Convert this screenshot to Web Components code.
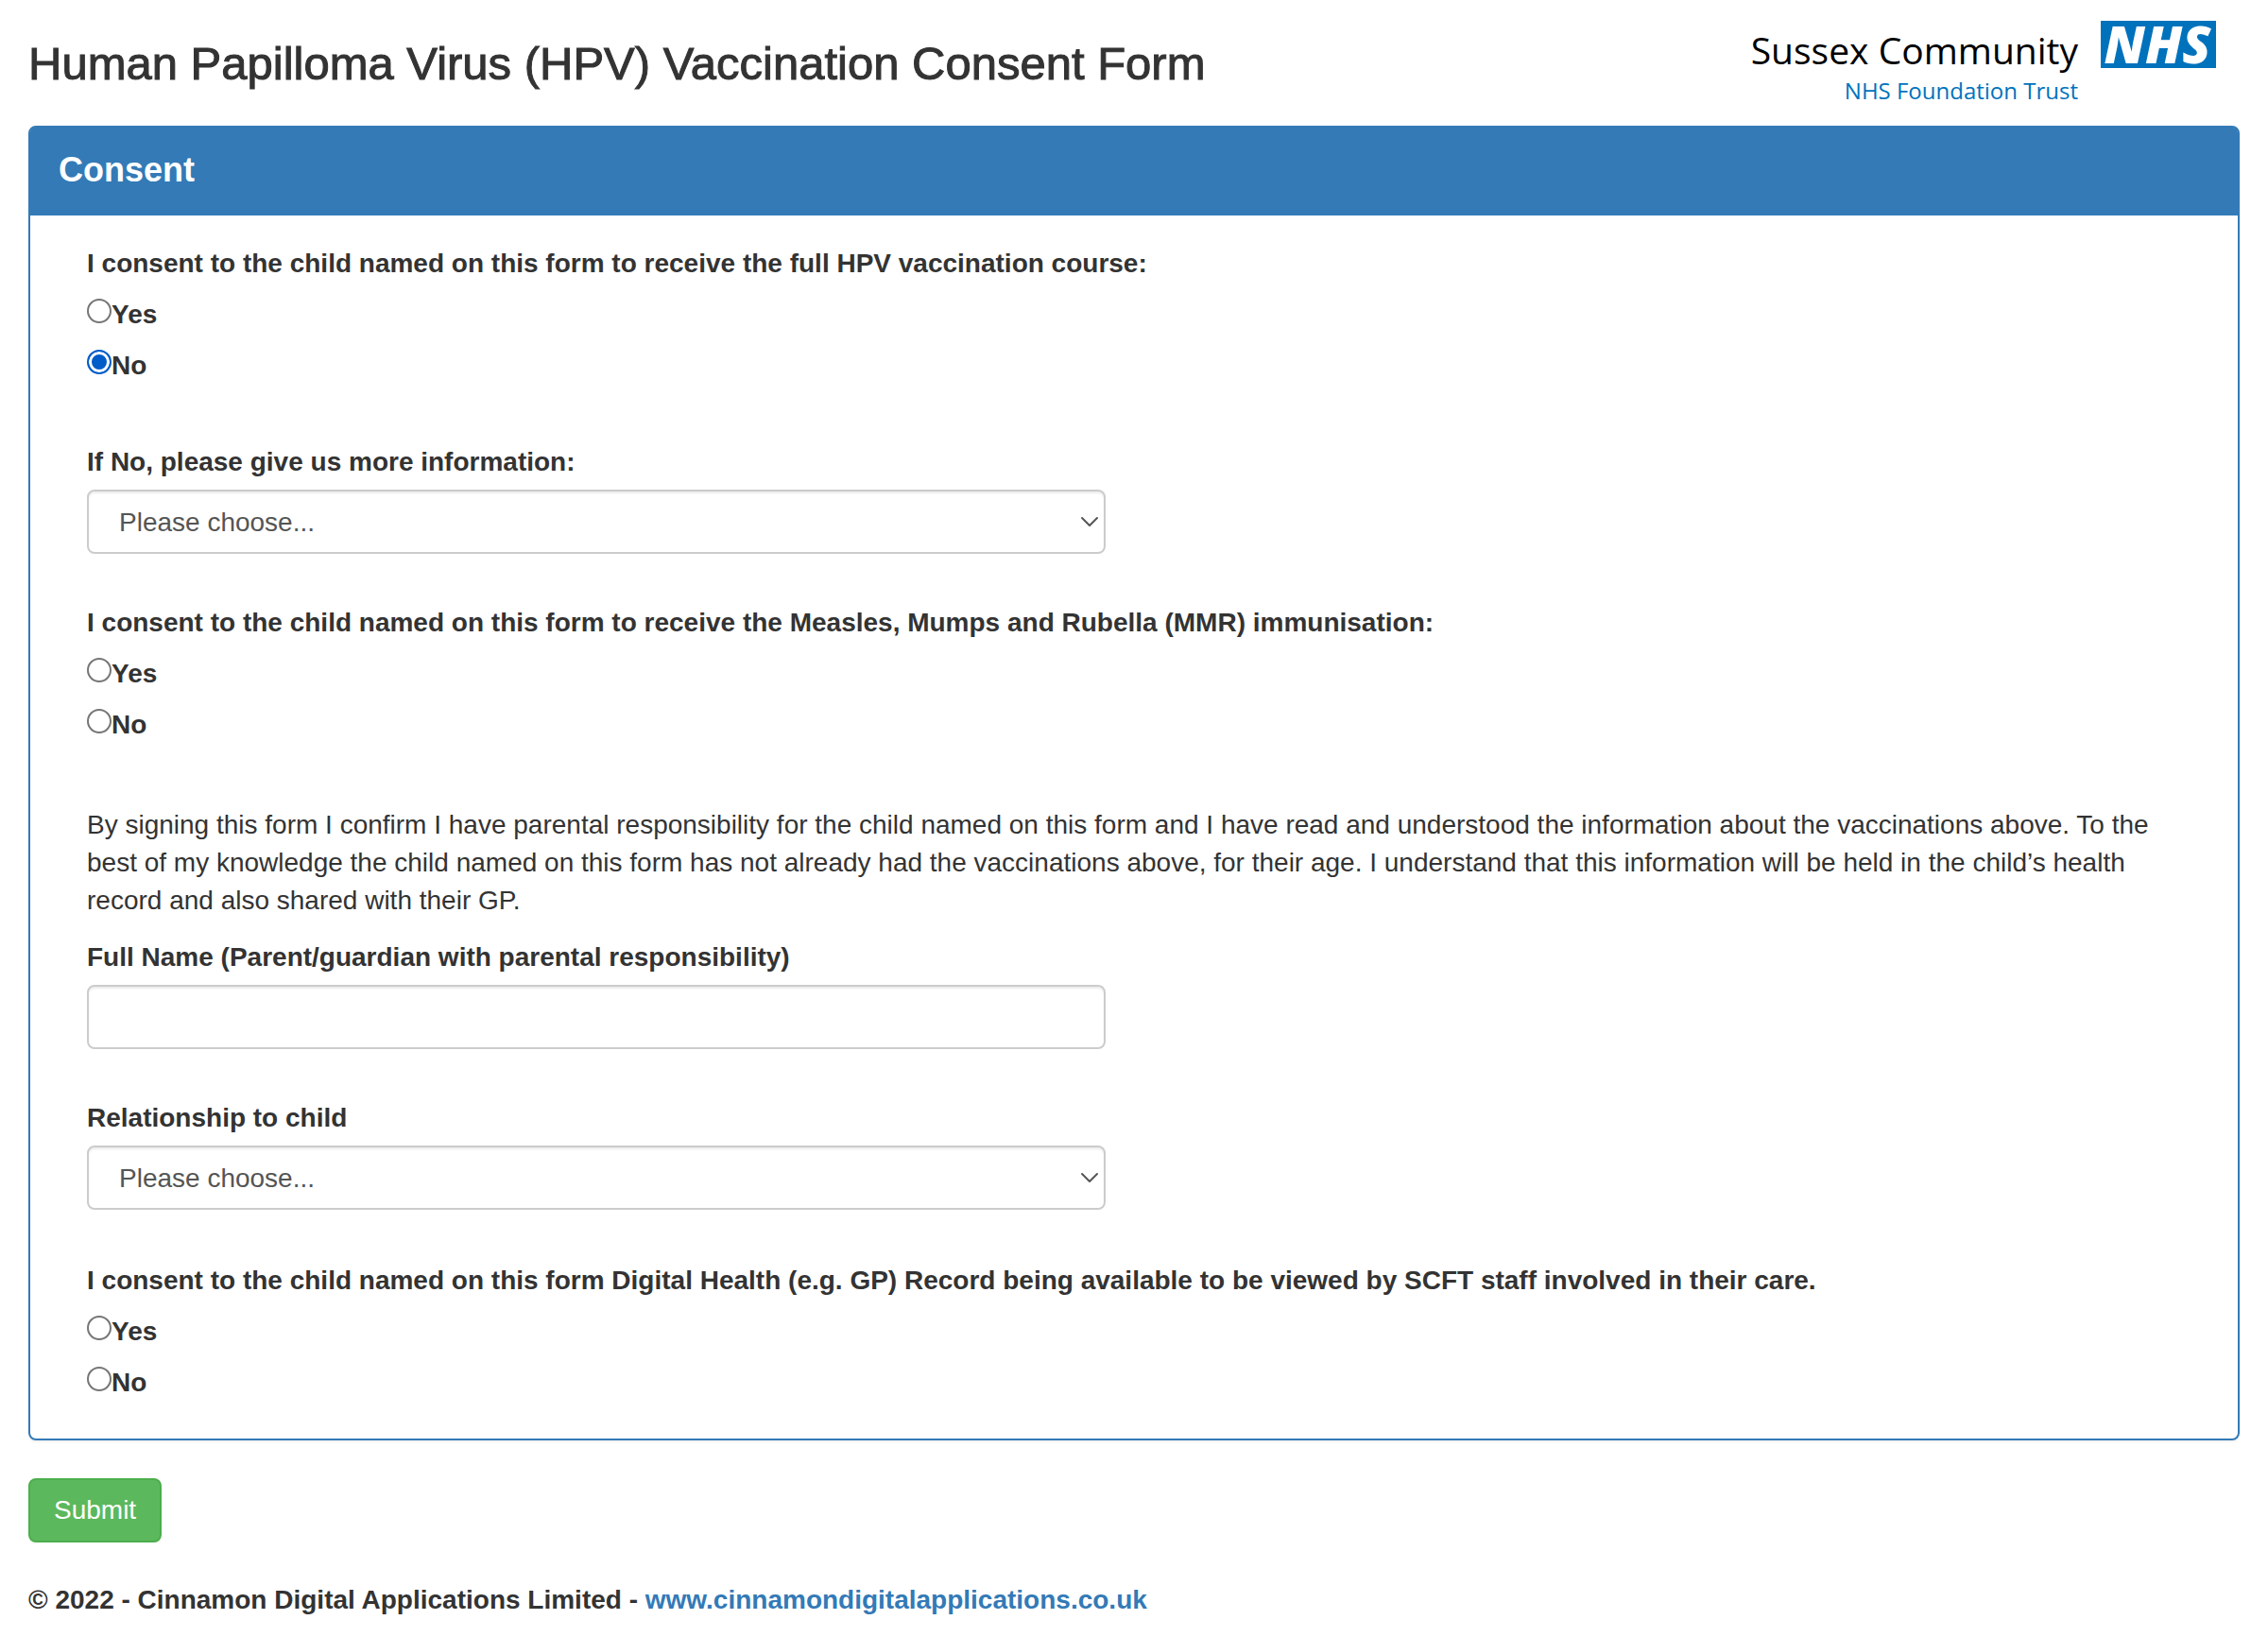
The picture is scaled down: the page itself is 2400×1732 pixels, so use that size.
<!DOCTYPE html>
<html lang="en">
<head>
<meta charset="utf-8">
<meta name="viewport" content="width=device-width, initial-scale=1">
<title>Human Papilloma Virus (HPV) Vaccination Consent Form</title>
<style>
  body {
    margin: 0;
    background: #fff;
    color: #333;
    font: 28px/40px "Liberation Sans", Arial, sans-serif;
  }
</style>
</head>
<body>
<consent-page></consent-page>

<script>
const base = `
  *, *::before, *::after { box-sizing: border-box; }
  :host { display: block; }
`;

class ShadowElement extends HTMLElement {
  connectedCallback() {
    if (this.shadowRoot) return;
    this.attachShadow({ mode: 'open' }).innerHTML = `<style>${base}</style>${this.render()}`;
  }
  attr(name) { return this.getAttribute(name) || ''; }
}

/* Trust name beside the blue lozenge */
customElements.define('trust-logo', class extends ShadowElement {
  render() {
    return `<style>
      :host { font-family: "Open Sans", "Noto Sans", sans-serif; font-weight: 500; }
      .logo { display: flex; align-items: flex-start; gap: 24px; }
      .names { display: flex; flex-direction: column; align-items: flex-end; color: #000; padding-top: 4px; }
      .trust { font-size: 39px; line-height: 53px; white-space: nowrap; }
      .type { font-size: 24px; line-height: 33px; color: #0072bc; white-space: nowrap; }
      svg { display: block; width: 122px; height: 50px; overflow: visible; }
      text { font: italic 800 55px "Open Sans", sans-serif; fill: #fff; }
    </style>
    <div class="logo">
      <div class="names"><span class="trust">Sussex Community</span><span class="type">NHS Foundation Trust</span></div>
      <svg viewBox="0 0 122 50" role="img" aria-label="NHS">
        <rect width="122" height="50" fill="#0072bc"/>
        <text x="60" y="45" text-anchor="middle">NHS</text>
      </svg>
    </div>`;
  }
});

customElements.define('page-header', class extends ShadowElement {
  render() {
    return `<style>
      header { display: flex; justify-content: space-between; align-items: flex-start; padding: 22px 25px 21px 0; }
      h1 { margin: 0; padding-top: 19px; font-size: 49px; line-height: 52px; font-weight: 400; -webkit-text-stroke: 1px currentColor; }
    </style>
    <header><h1><slot></slot></h1><trust-logo></trust-logo></header>`;
  }
});

customElements.define('form-panel', class extends ShadowElement {
  render() {
    return `<style>
      section { border: 2px solid #337ab7; border-radius: 8px; box-shadow: 0 2px 2px rgba(0,0,0,.05); background: #fff; }
      h2 { margin: 0; padding: 25px 30px 28px; font-size: 36px; line-height: 40px; background: #337ab7; color: #fff; border-radius: 5px 5px 0 0; }
      .body { padding: 31px 60px 39px; }
    </style>
    <section><h2>${this.attr('heading')}</h2><div class="body"><slot></slot></div></section>`;
  }
});

customElements.define('yes-no-question', class extends ShadowElement {
  render() {
    const name = this.attr('name');
    const row = v => `<label><input type="radio" name="${name}" value="${v}"${this.attr('value') === v ? ' checked' : ''}><span>${v}</span></label>`;
    return `<style>
      fieldset { display: block; margin: 0; padding: 0; border: 0; min-width: 0; font-weight: 700; }
      legend { display: block; padding: 0; }
      label { display: flex; align-items: flex-start; width: fit-content; margin-top: 14px; }
      input {
        appearance: none; flex: none; width: 26px; height: 26px; margin: 3px 0 0;
        border: 2px solid #767676; border-radius: 50%; background: #fff;
      }
      input:checked { border-color: #005cc8; background: #005cc8; box-shadow: inset 0 0 0 3px #fff; }
    </style>
    <fieldset><legend><slot></slot></legend>${row('Yes')}${row('No')}</fieldset>`;
  }
});

const fieldStyle = `
  .field { display: flex; flex-direction: column; gap: 9px; width: calc(50% - 30px); }
  label { font-weight: 700; white-space: nowrap; }
  input, select {
    display: block; width: 100%; height: 68px; margin: 0; border: 2px solid #ccc; border-radius: 8px;
    background: #fff; box-shadow: inset 0 2px 2px rgba(0,0,0,.075); color: #555; font: inherit;
  }
`;

customElements.define('text-field', class extends ShadowElement {
  render() {
    return `<style>${fieldStyle} input { padding: 12px 24px; }</style>
    <div class="field"><label for="control"><slot></slot></label><input id="control" type="text" name="${this.attr('name')}"></div>`;
  }
});

customElements.define('select-field', class extends ShadowElement {
  render() {
    return `<style>${fieldStyle}
      .box { display: grid; align-items: center; }
      .box > * { grid-area: 1 / 1; }
      select { appearance: none; padding: 2px 40px 0 32px; }
      svg { justify-self: end; width: 20px; height: 12px; margin-right: 7px; pointer-events: none; }
    </style>
    <div class="field"><label for="control"><slot></slot></label>
      <div class="box">
        <select id="control" name="${this.attr('name')}"><option>Please choose...</option></select>
        <svg viewBox="0 0 20 12" aria-hidden="true"><path d="M2 2l8 8 8-8" fill="none" stroke="#555" stroke-width="2" stroke-linecap="round" stroke-linejoin="round"/></svg>
      </div>
    </div>`;
  }
});

customElements.define('submit-button', class extends ShadowElement {
  render() {
    return `<style>
      button {
        display: block; height: 68px; margin: 0; padding: 0 25px; border: 2px solid #4cae4c; border-radius: 8px;
        background: #5cb85c; color: #fff; font: inherit; cursor: pointer;
      }
    </style><button type="submit"><slot></slot></button>`;
  }
});

customElements.define('page-footer', class extends ShadowElement {
  render() {
    return `<style>
      footer { font-weight: 700; }
      a { color: #337ab7; text-decoration: none; }
    </style>
    <footer>© 2022 - Cinnamon Digital Applications Limited - <a href="#">www.cinnamondigitalapplications.co.uk</a></footer>`;
  }
});

customElements.define('consent-page', class extends ShadowElement {
  render() {
    return `<style>
      :host { padding: 0 30px 19px; }
      p { margin: 66px 0 20px; }
      .after-radios { margin-top: 62px; }
      .next { margin-top: 53px; }
      .next.last { margin-top: 55px; }
      submit-button { margin-top: 40px; }
      page-footer { margin-top: 41px; }
    </style>
    <page-header>Human Papilloma Virus (HPV) Vaccination Consent Form</page-header>
    <main>
      <form-panel heading="Consent">
        <yes-no-question name="hpv" value="No">I consent to the child named on this form to receive the full HPV vaccination course:</yes-no-question>
        <select-field class="after-radios" name="reason">If No, please give us more information:</select-field>
        <yes-no-question class="next" name="mmr">I consent to the child named on this form to receive the Measles, Mumps and Rubella (MMR) immunisation:</yes-no-question>
        <p>By signing this form I confirm I have parental responsibility for the child named on this form and I have read and understood the information about the vaccinations above. To the best of my knowledge the child named on this form has not already had the vaccinations above, for their age. I understand that this information will be held in the child’s health record and also shared with their GP.</p>
        <text-field name="fullname">Full Name (Parent/guardian with parental responsibility)</text-field>
        <select-field class="next" name="relationship">Relationship to child</select-field>
        <yes-no-question class="next last" name="record">I consent to the child named on this form Digital Health (e.g. GP) Record being available to be viewed by SCFT staff involved in their care.</yes-no-question>
      </form-panel>
      <submit-button>Submit</submit-button>
    </main>
    <page-footer></page-footer>`;
  }
});
</script>
</body>
</html>
